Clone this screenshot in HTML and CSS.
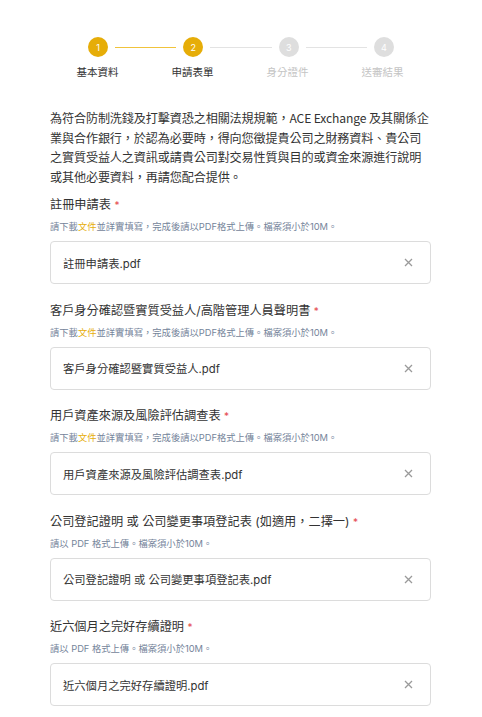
FILE: index.html
```html
<!DOCTYPE html>
<html lang="zh-Hant">
<head>
<meta charset="utf-8">
<title>申請表單</title>
<link rel="stylesheet" href="styles.css">
</head>
<body>
<div class="page">
  <div class="stepper">
    <div class="track">
      <span class="dot active">1</span>
      <span class="line active"></span>
      <span class="dot active">2</span>
      <span class="line"></span>
      <span class="dot">3</span>
      <span class="line"></span>
      <span class="dot">4</span>
    </div>
    <div class="labels">
      <span class="step-label active">基本資料</span>
      <span class="step-label active">申請表單</span>
      <span class="step-label">身分證件</span>
      <span class="step-label">送審結果</span>
    </div>
  </div>

  <p class="intro">為符合防制洗錢及打擊資恐之相關法規規範，ACE Exchange 及其關係企業與合作銀行，於認為必要時，得向您徵提貴公司之財務資料、貴公司之實質受益人之資訊或請貴公司對交易性質與目的或資金來源進行說明或其他必要資料，再請您配合提供。</p>

  <div class="field">
    <div class="label">註冊申請表 <span class="req">*</span></div>
    <div class="hint">請下載<span class="link">文件</span>並詳實填寫，完成後請以PDF格式上傳。檔案須小於10M。</div>
    <div class="file"><span class="name">註冊申請表.pdf</span><svg class="x" width="9" height="9" viewBox="0 0 9 9"><path d="M1 1L8 8M8 1L1 8"/></svg></div>
  </div>

  <div class="field">
    <div class="label">客戶身分確認暨實質受益人/高階管理人員聲明書 <span class="req">*</span></div>
    <div class="hint">請下載<span class="link">文件</span>並詳實填寫，完成後請以PDF格式上傳。檔案須小於10M。</div>
    <div class="file"><span class="name">客戶身分確認暨實質受益人.pdf</span><svg class="x" width="9" height="9" viewBox="0 0 9 9"><path d="M1 1L8 8M8 1L1 8"/></svg></div>
  </div>

  <div class="field">
    <div class="label">用戶資產來源及風險評估調查表 <span class="req">*</span></div>
    <div class="hint">請下載<span class="link">文件</span>並詳實填寫，完成後請以PDF格式上傳。檔案須小於10M。</div>
    <div class="file"><span class="name">用戶資產來源及風險評估調查表.pdf</span><svg class="x" width="9" height="9" viewBox="0 0 9 9"><path d="M1 1L8 8M8 1L1 8"/></svg></div>
  </div>

  <div class="field">
    <div class="label">公司登記證明 或 公司變更事項登記表 (如適用，二擇一) <span class="req">*</span></div>
    <div class="hint">請以 PDF 格式上傳。檔案須小於10M。</div>
    <div class="file"><span class="name">公司登記證明 或 公司變更事項登記表.pdf</span><svg class="x" width="9" height="9" viewBox="0 0 9 9"><path d="M1 1L8 8M8 1L1 8"/></svg></div>
  </div>

  <div class="field">
    <div class="label">近六個月之完好存續證明 <span class="req">*</span></div>
    <div class="hint">請以 PDF 格式上傳。檔案須小於10M。</div>
    <div class="file"><span class="name">近六個月之完好存續證明.pdf</span><svg class="x" width="9" height="9" viewBox="0 0 9 9"><path d="M1 1L8 8M8 1L1 8"/></svg></div>
  </div>
</div>
</body>
</html>
```

FILE: styles.css
```css
* { box-sizing: border-box; }
html, body { margin: 0; padding: 0; background: #fff; }
body {
  font-family: Inter, "Noto Sans CJK TC", "Noto Sans", sans-serif;
  color: #333;
}
.page {
  width: 381px;
  margin: 0 0 0 50px;
  padding-top: 37px;
}
.stepper { display: flex; flex-direction: column; }
.track {
  display: flex;
  align-items: center;
  padding: 0 37px 0 38px;
}
.dot {
  width: 20px;
  height: 20px;
  border-radius: 50%;
  background: #dedede;
  color: #fff;
  font-size: 9px;
  display: flex;
  align-items: center;
  justify-content: center;
  flex: none;
}
.dot.active { background: #e6ad08; }
.line {
  flex: 1;
  height: 1px;
  background: #e3e3e3;
  margin: 0 7px;
}
.line.active { background: #f0c33c; }
.labels {
  display: grid;
  grid-template-columns: repeat(4, 95px);
  margin-top: 9px;
}
.step-label {
  text-align: center;
  font-size: 10.5px;
  line-height: 14px;
  color: #c4c4c4;
}
.step-label.active { color: #333; }
.intro {
  margin: 28px 0 0;
  font-family: "Noto Sans CJK TC", sans-serif;
  font-size: 12.1px;
  letter-spacing: -0.12px;
  line-height: 19.5px;
  color: #333;
}
.field { margin-top: 10px; margin-bottom: 17.5px; }
.label {
  font-size: 12.2px;
  line-height: 18px;
  color: #333;
}
.req { color: #e5484d; font-size: 10px; }
.hint {
  margin-top: 6px;
  font-size: 9.3px;
  line-height: 14px;
  color: #75849a;
}
.link { color: #e6ad08; }
.file {
  margin-top: 7px;
  height: 43px;
  border: 1px solid #dcdcdc;
  border-radius: 4px;
  display: flex;
  align-items: center;
  justify-content: space-between;
  padding: 0 17px 0 12px;
}
.name { font-size: 11.3px; color: #333; }
.x { fill: none; stroke: #9a9a9a; stroke-width: 1.3; }
```
